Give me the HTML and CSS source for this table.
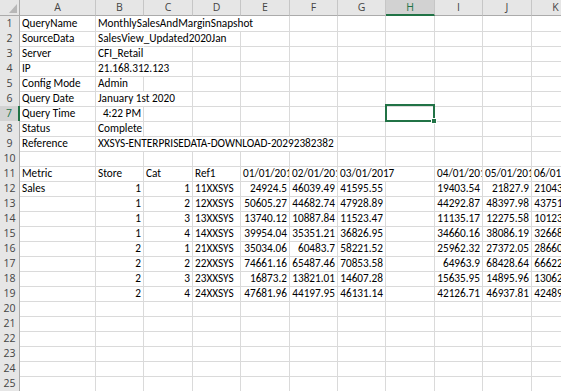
FILE: index.html
```html
<!DOCTYPE html>
<html lang="en">
<head>
    <meta charset="UTF-8">
    <title>Query Snapshot</title>
    <link rel="stylesheet" href="styles.css">
</head>
<body>
    <div class="sheet">
        <!-- column letters -->
        <div class="row head">
            <div class="corner"></div>
            <div class="col-h">A</div>
            <div class="col-h">B</div>
            <div class="col-h">C</div>
            <div class="col-h">D</div>
            <div class="col-h">E</div>
            <div class="col-h">F</div>
            <div class="col-h">G</div>
            <div class="col-h on">H</div>
            <div class="col-h">I</div>
            <div class="col-h">J</div>
            <div class="col-h">K</div>
        </div>

        <!-- query info -->
        <div class="row">
            <div class="row-h">1</div>
            <div class="cell">QueryName</div>
            <div class="cell spill">MonthlySalesAndMarginSnapshot</div>
            <div class="cell spill"></div><div class="cell spill"></div><div class="cell"></div>
            <div class="cell"></div><div class="cell"></div><div class="cell"></div>
            <div class="cell"></div><div class="cell"></div><div class="cell"></div>
        </div>
        <div class="row">
            <div class="row-h">2</div>
            <div class="cell">SourceData</div>
            <div class="cell spill">SalesView_Updated2020Jan</div>
            <div class="cell spill"></div><div class="cell"></div><div class="cell"></div>
            <div class="cell"></div><div class="cell"></div><div class="cell"></div>
            <div class="cell"></div><div class="cell"></div><div class="cell"></div>
        </div>
        <div class="row">
            <div class="row-h">3</div>
            <div class="cell">Server</div>
            <div class="cell spill">CFI_Retail</div>
            <div class="cell"></div><div class="cell"></div><div class="cell"></div>
            <div class="cell"></div><div class="cell"></div><div class="cell"></div>
            <div class="cell"></div><div class="cell"></div><div class="cell"></div>
        </div>
        <div class="row">
            <div class="row-h">4</div>
            <div class="cell">IP</div>
            <div class="cell spill">21.168.312.123</div>
            <div class="cell"></div><div class="cell"></div><div class="cell"></div>
            <div class="cell"></div><div class="cell"></div><div class="cell"></div>
            <div class="cell"></div><div class="cell"></div><div class="cell"></div>
        </div>
        <div class="row">
            <div class="row-h">5</div>
            <div class="cell">Config Mode</div>
            <div class="cell">Admin</div>
            <div class="cell"></div><div class="cell"></div><div class="cell"></div>
            <div class="cell"></div><div class="cell"></div><div class="cell"></div>
            <div class="cell"></div><div class="cell"></div><div class="cell"></div>
        </div>
        <div class="row">
            <div class="row-h">6</div>
            <div class="cell">Query Date</div>
            <div class="cell spill">January 1st 2020</div>
            <div class="cell"></div><div class="cell"></div><div class="cell"></div>
            <div class="cell"></div><div class="cell"></div><div class="cell"></div>
            <div class="cell"></div><div class="cell"></div><div class="cell"></div>
        </div>
        <div class="row">
            <div class="row-h on">7</div>
            <div class="cell">Query Time</div>
            <div class="cell num">4:22 PM</div>
            <div class="cell"></div><div class="cell"></div><div class="cell"></div>
            <div class="cell"></div><div class="cell"></div>
            <div class="cell active"><span class="cursor"></span></div>
            <div class="cell"></div><div class="cell"></div><div class="cell"></div>
        </div>
        <div class="row">
            <div class="row-h">8</div>
            <div class="cell">Status</div>
            <div class="cell">Complete</div>
            <div class="cell"></div><div class="cell"></div><div class="cell"></div>
            <div class="cell"></div><div class="cell"></div><div class="cell"></div>
            <div class="cell"></div><div class="cell"></div><div class="cell"></div>
        </div>
        <div class="row">
            <div class="row-h">9</div>
            <div class="cell">Reference</div>
            <div class="cell spill">XXSYS-ENTERPRISEDATA-DOWNLOAD-20292382382</div>
            <div class="cell spill"></div><div class="cell spill"></div><div class="cell spill"></div>
            <div class="cell"></div><div class="cell"></div><div class="cell"></div>
            <div class="cell"></div><div class="cell"></div><div class="cell"></div>
        </div>
        <div class="row">
            <div class="row-h">10</div>
            <div class="cell"></div><div class="cell"></div><div class="cell"></div>
            <div class="cell"></div><div class="cell"></div><div class="cell"></div>
            <div class="cell"></div><div class="cell"></div><div class="cell"></div>
            <div class="cell"></div><div class="cell"></div>
        </div>

        <!-- sales table -->
        <div class="row">
            <div class="row-h">11</div>
            <div class="cell">Metric</div>
            <div class="cell">Store</div>
            <div class="cell">Cat</div>
            <div class="cell">Ref1</div>
            <div class="cell">01/01/2017</div>
            <div class="cell">02/01/2017</div>
            <div class="cell spill">03/01/2017</div>
            <div class="cell"></div>
            <div class="cell">04/01/2017</div>
            <div class="cell">05/01/2017</div>
            <div class="cell">06/01/2017</div>
        </div>
        <div class="row">
            <div class="row-h">12</div>
            <div class="cell">Sales</div>
            <div class="cell num">1</div><div class="cell num">1</div><div class="cell">11XXSYS</div>
            <div class="cell num">24924.5</div><div class="cell num">46039.49</div><div class="cell num">41595.55</div>
            <div class="cell"></div>
            <div class="cell num">19403.54</div><div class="cell num">21827.9</div><div class="cell num">21043.49</div>
        </div>
        <div class="row">
            <div class="row-h">13</div>
            <div class="cell"></div>
            <div class="cell num">1</div><div class="cell num">2</div><div class="cell">12XXSYS</div>
            <div class="cell num">50605.27</div><div class="cell num">44682.74</div><div class="cell num">47928.89</div>
            <div class="cell"></div>
            <div class="cell num">44292.87</div><div class="cell num">48397.98</div><div class="cell num">43751.42</div>
        </div>
        <div class="row">
            <div class="row-h">14</div>
            <div class="cell"></div>
            <div class="cell num">1</div><div class="cell num">3</div><div class="cell">13XXSYS</div>
            <div class="cell num">13740.12</div><div class="cell num">10887.84</div><div class="cell num">11523.47</div>
            <div class="cell"></div>
            <div class="cell num">11135.17</div><div class="cell num">12275.58</div><div class="cell num">10123.63</div>
        </div>
        <div class="row">
            <div class="row-h">15</div>
            <div class="cell"></div>
            <div class="cell num">1</div><div class="cell num">4</div><div class="cell">14XXSYS</div>
            <div class="cell num">39954.04</div><div class="cell num">35351.21</div><div class="cell num">36826.95</div>
            <div class="cell"></div>
            <div class="cell num">34660.16</div><div class="cell num">38086.19</div><div class="cell num">32668.11</div>
        </div>
        <div class="row">
            <div class="row-h">16</div>
            <div class="cell"></div>
            <div class="cell num">2</div><div class="cell num">1</div><div class="cell">21XXSYS</div>
            <div class="cell num">35034.06</div><div class="cell num">60483.7</div><div class="cell num">58221.52</div>
            <div class="cell"></div>
            <div class="cell num">25962.32</div><div class="cell num">27372.05</div><div class="cell num">28660.37</div>
        </div>
        <div class="row">
            <div class="row-h">17</div>
            <div class="cell"></div>
            <div class="cell num">2</div><div class="cell num">2</div><div class="cell">22XXSYS</div>
            <div class="cell num">74661.16</div><div class="cell num">65487.46</div><div class="cell num">70853.58</div>
            <div class="cell"></div>
            <div class="cell num">64963.9</div><div class="cell num">68428.64</div><div class="cell num">66622.85</div>
        </div>
        <div class="row">
            <div class="row-h">18</div>
            <div class="cell"></div>
            <div class="cell num">2</div><div class="cell num">3</div><div class="cell">23XXSYS</div>
            <div class="cell num">16873.2</div><div class="cell num">13821.01</div><div class="cell num">14607.28</div>
            <div class="cell"></div>
            <div class="cell num">15635.95</div><div class="cell num">14895.96</div><div class="cell num">13062.74</div>
        </div>
        <div class="row">
            <div class="row-h">19</div>
            <div class="cell"></div>
            <div class="cell num">2</div><div class="cell num">4</div><div class="cell">24XXSYS</div>
            <div class="cell num">47681.96</div><div class="cell num">44197.95</div><div class="cell num">46131.14</div>
            <div class="cell"></div>
            <div class="cell num">42126.71</div><div class="cell num">46937.81</div><div class="cell num">42489.26</div>
        </div>

        <!-- empty rows -->
        <div class="row">
            <div class="row-h">20</div>
            <div class="cell"></div><div class="cell"></div><div class="cell"></div><div class="cell"></div>
            <div class="cell"></div><div class="cell"></div><div class="cell"></div><div class="cell"></div>
            <div class="cell"></div><div class="cell"></div><div class="cell"></div>
        </div>
        <div class="row">
            <div class="row-h">21</div>
            <div class="cell"></div><div class="cell"></div><div class="cell"></div><div class="cell"></div>
            <div class="cell"></div><div class="cell"></div><div class="cell"></div><div class="cell"></div>
            <div class="cell"></div><div class="cell"></div><div class="cell"></div>
        </div>
        <div class="row">
            <div class="row-h">22</div>
            <div class="cell"></div><div class="cell"></div><div class="cell"></div><div class="cell"></div>
            <div class="cell"></div><div class="cell"></div><div class="cell"></div><div class="cell"></div>
            <div class="cell"></div><div class="cell"></div><div class="cell"></div>
        </div>
        <div class="row">
            <div class="row-h">23</div>
            <div class="cell"></div><div class="cell"></div><div class="cell"></div><div class="cell"></div>
            <div class="cell"></div><div class="cell"></div><div class="cell"></div><div class="cell"></div>
            <div class="cell"></div><div class="cell"></div><div class="cell"></div>
        </div>
        <div class="row">
            <div class="row-h">24</div>
            <div class="cell"></div><div class="cell"></div><div class="cell"></div><div class="cell"></div>
            <div class="cell"></div><div class="cell"></div><div class="cell"></div><div class="cell"></div>
            <div class="cell"></div><div class="cell"></div><div class="cell"></div>
        </div>
        <div class="row">
            <div class="row-h">25</div>
            <div class="cell"></div><div class="cell"></div><div class="cell"></div><div class="cell"></div>
            <div class="cell"></div><div class="cell"></div><div class="cell"></div><div class="cell"></div>
            <div class="cell"></div><div class="cell"></div><div class="cell"></div>
        </div>
    </div>
</body>
</html>
```

FILE: styles.css
```css
/* base */
body {
    margin: 0;
    background: #ffffff;
    overflow: hidden;
    font-family: 'Liberation Sans', Arial, sans-serif;
    color: #000000;
}

.sheet {
    width: 580px;
}

/* every row shares the same column widths */
.row {
    display: grid;
    grid-template-columns: 20px 76px 48px 49px 48px 49px 48px 48px 49px 48px 49px 48px;
    height: 15px;
}

.row.head {
    height: 16px;
}

/* header cells */
.corner,
.col-h,
.row-h {
    box-sizing: border-box;
    background: #e6e6e6;
    color: #444444;
    font-family: 'Open Sans', 'Noto Sans', sans-serif;
    font-size: 10.5px;
    border-right: 1px solid #c6c6c6;
    border-bottom: 1px solid #c6c6c6;
}

.corner {
    position: relative;
    border-bottom-color: #ababab;
    border-right-color: #ababab;
}

/* little triangle in the select-all box */
.corner::after {
    content: '';
    position: absolute;
    right: 2px;
    bottom: 2px;
    border-style: solid;
    border-width: 0 0 9px 8px;
    border-color: transparent transparent #b7b7b7 transparent;
}

.col-h {
    text-align: center;
    line-height: 15px;
    border-bottom-color: #ababab;
}

.col-h.on {
    background: #d2d2d2;
    color: #217346;
    border-bottom: 2px solid #217346;
    line-height: 14px;
}

.row-h {
    text-align: center;
    line-height: 15px;
    border-right-color: #ababab;
    border-bottom-color: #d4d4d4;
}

.row-h.on {
    background: #d2d2d2;
    color: #217346;
    border-right: 2px solid #217346;
}

/* grid cells (Calibri-like where available) */
.cell {
    box-sizing: border-box;
    border-right: 1px solid #dadada;
    border-bottom: 1px solid #dadada;
    font-family: Carlito, 'Liberation Sans', Arial, sans-serif;
    font-size: 11.25px;
    line-height: 15px;
    padding: 0 2px;
    white-space: nowrap;
    overflow: hidden;
}

.cell.num {
    text-align: right;
}

/* text that runs into the empty cells on its right */
.cell.spill {
    overflow: visible;
    border-right-color: transparent;
}

.cell.active {
    position: relative;
    overflow: visible;
}

.cursor {
    position: absolute;
    top: -2px;
    left: -1px;
    right: -1px;
    bottom: -1px;
    border: 2px solid #217346;
}

.cursor::after {
    content: '';
    position: absolute;
    right: -4px;
    bottom: -4px;
    width: 4px;
    height: 4px;
    background: #217346;
    border: 1px solid #ffffff;
}
```
